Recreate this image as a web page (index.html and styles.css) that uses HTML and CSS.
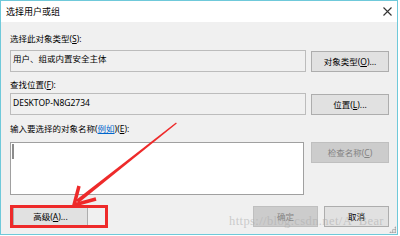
FILE: index.html
```html
<!DOCTYPE html>
<html>
<head>
<meta charset="utf-8">
<link rel="stylesheet" href="styles.css">
</head>
<body>
<div class="dialog">
  <div class="titlebar">
    <span class="title">选择用户或组</span>
    <svg class="close" width="9" height="9" viewBox="0 0 9 9"><path d="M0.5 0.5 L8.5 8.5 M8.5 0.5 L0.5 8.5" stroke="#333" stroke-width="1.1" fill="none"/></svg>
  </div>
  <div class="content">
    <div class="label l1">选择此对象类型(<u>S</u>):</div>
    <div class="row r1">
      <div class="field">用户、组或内置安全主体</div>
      <div class="btn">对象类型(<u>O</u>)...</div>
    </div>
    <div class="label l2">查找位置(<u>F</u>):</div>
    <div class="row r2">
      <div class="field f2">DESKTOP-N8G2734</div>
      <div class="btn">位置(<u>L</u>)...</div>
    </div>
    <div class="label l3">输入要选择的对象名称(<span class="link">例如</span>)(<u>E</u>):</div>
    <div class="row r3">
      <div class="textarea"><span class="caret"></span></div>
      <div class="btn disabled">检查名称(<u>C</u>)</div>
    </div>
    <div class="footer">
      <div class="btn adv">高级(<u>A</u>)...</div>
      <div class="spacer"></div>
      <div class="btn small disabled">确定</div>
      <div class="btn small">取消</div>
    </div>
  </div>
  <div class="grip"></div>
</div>
<div class="redbox"></div>
<svg class="arrow" width="400" height="236" viewBox="0 0 400 236">
  <polygon points="176,122.5 176.8,123.5 78.5,203 76,200" fill="#ee2a2a"/>
  <polyline points="79,186 74,205 96,199" fill="none" stroke="#ee2a2a" stroke-width="3.5" stroke-linejoin="miter" stroke-linecap="butt"/>
</svg>
<div class="watermark">https://blog.csdn.net/A_Bear</div>
</body>
</html>
```

FILE: styles.css
```css
html, body {
  margin: 0;
  padding: 0;
  background: #ffffff;
}
body {
  width: 400px;
  height: 236px;
  position: relative;
  overflow: hidden;
  font-family: "Noto Sans", "Noto Sans CJK SC", sans-serif;
  font-size: 8.5px;
  color: #000;
}
u {
  text-decoration: underline;
  text-underline-offset: 1px;
}
.dialog {
  width: 398px;
  height: 235px;
  box-sizing: border-box;
  border: 1px solid #6fc9da;
  background: #f0f0f0;
  display: flex;
  flex-direction: column;
  position: relative;
}
.titlebar {
  height: 21px;
  flex: none;
  background: #ffffff;
  display: flex;
  align-items: center;
  justify-content: space-between;
  padding: 0 5px 0 5px;
}
.title {
  font-size: 9px;
  line-height: 12px;
  margin-top: 1px;
}
.close {
  margin-right: 0px;
  margin-top: 0px;
}
.content {
  display: flex;
  flex-direction: column;
  padding: 0 8px 0 9px;
}
.label {
  line-height: 12px;
  height: 12px;
  white-space: nowrap;
}
.l1 { margin-top: 11px; }
.l2 { margin-top: 7px; }
.l3 { margin-top: 8px; }
.link {
  color: #0066cc;
  text-decoration: underline;
}
.row {
  display: flex;
  gap: 5px;
  align-items: flex-start;
}
.r1 { margin-top: 5px; }
.r2 { margin-top: 2px; }
.r3 { margin-top: 7px; gap: 7px; }
.field {
  width: 296px;
  height: 22px;
  box-sizing: border-box;
  border: 1px solid #bcbcbc;
  background: #f0f0f0;
  padding: 2px 2px 0 2px;
  line-height: 12px;
  white-space: nowrap;
}
.f2 { padding-top: 3px; }
.btn {
  width: 78px;
  height: 21px;
  box-sizing: border-box;
  border: 1px solid #adadad;
  background: #e1e1e1;
  display: flex;
  align-items: center;
  justify-content: center;
  white-space: nowrap;
  line-height: 12px;
}
.r1 .btn, .r2 .btn { margin-top: 1px; }
.btn.disabled {
  background: #cccccc;
  border-color: #bfbfbf;
  color: #838383;
}
.textarea {
  width: 294px;
  height: 53px;
  box-sizing: border-box;
  border: 1px solid #a0a0a0;
  background: #ffffff;
  position: relative;
}
.caret {
  position: absolute;
  left: 1px;
  top: 1px;
  width: 2px;
  height: 15px;
  background: #8c8c8c;
}
.footer {
  display: flex;
  margin-top: 11px;
  gap: 6px;
}
.spacer { flex: 1; }
.btn.adv {
  width: 75px;
  margin-left: 3px;
}
.btn.small { width: 65px; }
.grip {
  position: absolute;
  right: 1px;
  bottom: 1px;
  width: 7px;
  height: 7px;
  background:
    radial-gradient(circle, #9a9a9a 0.8px, transparent 1px) 0 0 / 2.5px 2.5px;
  clip-path: polygon(100% 0, 100% 100%, 0 100%);
}
.redbox {
  position: absolute;
  left: 10px;
  top: 205px;
  width: 98px;
  height: 23px;
  box-sizing: border-box;
  border: 3px solid #ee2a2a;
}
.arrow {
  position: absolute;
  left: 0;
  top: 0;
}
.watermark {
  position: absolute;
  left: 229px;
  top: 214px;
  font-family: "Liberation Serif", serif;
  font-size: 12.5px;
  letter-spacing: 0.4px;
  line-height: 14px;
  color: rgba(170, 170, 170, 0.55);
  white-space: nowrap;
}
```
